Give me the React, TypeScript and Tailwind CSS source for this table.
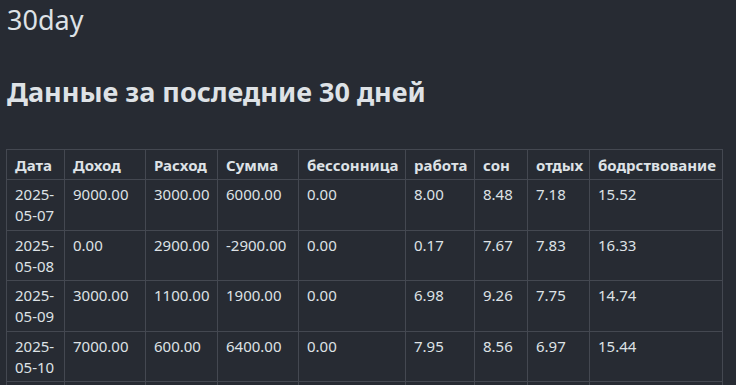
const headers = [
  "Дата",
  "Доход",
  "Расход",
  "Сумма",
  "бессонница",
  "работа",
  "сон",
  "отдых",
  "бодрствование",
];

const widths = ["w-[58px]", "w-[81px]", "w-[72px]", "w-[81px]", "w-[107px]", "w-[69px]", "w-[53px]", "w-[62px]", "w-[133px]"];

const rows = [
  ["2025-05-07", "9000.00", "3000.00", "6000.00", "0.00", "8.00", "8.48", "7.18", "15.52"],
  ["2025-05-08", "0.00", "2900.00", "-2900.00", "0.00", "0.17", "7.67", "7.83", "16.33"],
  ["2025-05-09", "3000.00", "1100.00", "1900.00", "0.00", "6.98", "9.26", "7.75", "14.74"],
  ["2025-05-10", "7000.00", "600.00", "6400.00", "0.00", "7.95", "8.56", "6.97", "15.44"],
  ["2025-05-11", "5000.00", "1200.00", "3800.00", "0.00", "7.50", "8.10", "7.20", "15.90"],
];

export default function App() {
  return (
    <div className="min-h-screen bg-[#272b33] text-[#dee2e6] px-[6px] font-['Noto_Sans',sans-serif]">
      <h1 className="text-[27px] leading-[40px] pl-[1px]">30day</h1>
      <h2 className="text-[27px] font-bold leading-[36px] mt-[34px] pl-[1px]">
        Данные за последние 30 дней
      </h2>
      <table className="table-fixed w-[716px] border-collapse mt-[39px] text-[15px] leading-[21px]">
        <colgroup>
          {widths.map((w, i) => (
            <col key={i} className={w} />
          ))}
        </colgroup>
        <thead>
          <tr>
            {headers.map((h) => (
              <th
                key={h}
                className="border border-[#444851] px-2 pt-[5px] pb-[3px] text-left font-bold"
              >
                {h}
              </th>
            ))}
          </tr>
        </thead>
        <tbody>
          {rows.map((r) => (
            <tr key={r[0]}>
              {r.map((c, i) => (
                <td
                  key={i}
                  className="border border-[#444851] px-2 pt-[4px] pb-[3.5px] align-top"
                >
                  {c}
                </td>
              ))}
            </tr>
          ))}
        </tbody>
      </table>
    </div>
  );
}
